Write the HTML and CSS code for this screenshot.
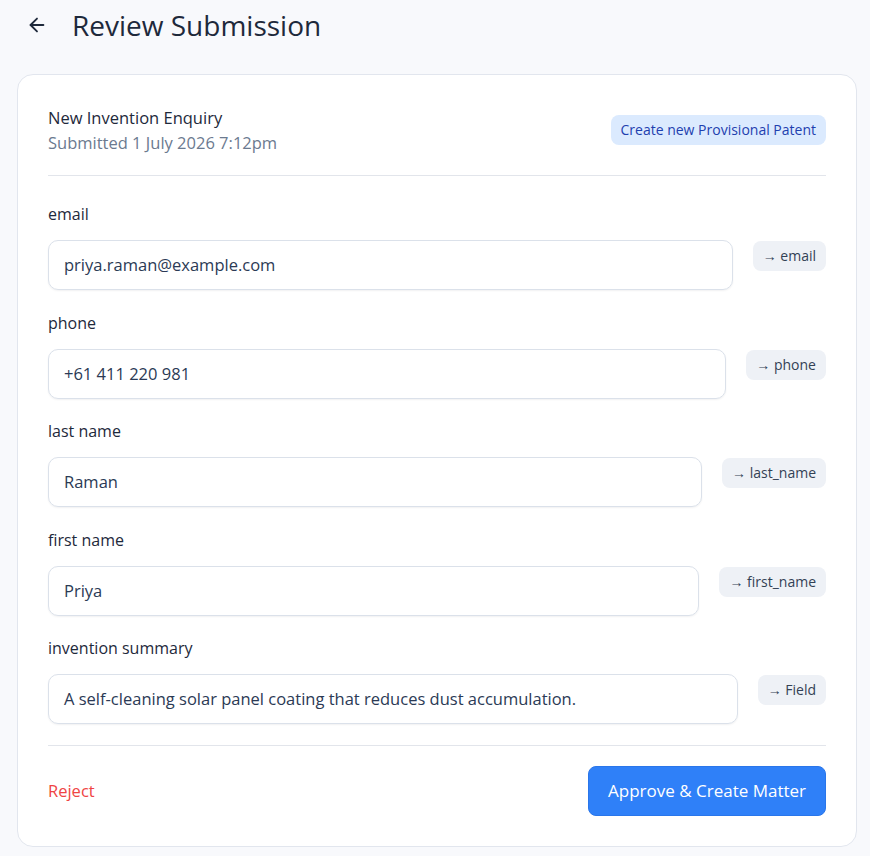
FILE: index.html
```html
<!DOCTYPE html>
<html lang="en">
<head>
    <meta charset="UTF-8">
    <meta name="viewport" content="width=device-width, initial-scale=1.0">
    <title>Review Submission</title>
    <link rel="stylesheet" href="styles.css">
</head>
<body>
    <div class="page-header">
        <a href="#" class="back-link" aria-label="Back">
            <svg width="22" height="22" viewBox="0 0 24 24" fill="none" stroke="currentColor" stroke-width="2" stroke-linecap="round" stroke-linejoin="round">
                <path d="M19 12H5"/>
                <path d="M12 19l-7-7 7-7"/>
            </svg>
        </a>
        <h1>Review Submission</h1>
    </div>

    <div class="review-card">
        <div class="review-head">
            <div>
                <div class="form-name">New Invention Enquiry</div>
                <div class="submitted-at">Submitted 1 July 2026 7:12pm</div>
            </div>
            <span class="matter-chip">Create new Provisional Patent</span>
        </div>

        <div class="field-list">
            <div class="field">
                <label>email</label>
                <div class="field-row">
                    <div class="field-value">priya.raman@example.com</div>
                    <span class="map-tag">→ email</span>
                </div>
            </div>
            <div class="field">
                <label>phone</label>
                <div class="field-row">
                    <div class="field-value">+61 411 220 981</div>
                    <span class="map-tag">→ phone</span>
                </div>
            </div>
            <div class="field">
                <label>last name</label>
                <div class="field-row">
                    <div class="field-value">Raman</div>
                    <span class="map-tag">→ last_name</span>
                </div>
            </div>
            <div class="field">
                <label>first name</label>
                <div class="field-row">
                    <div class="field-value">Priya</div>
                    <span class="map-tag">→ first_name</span>
                </div>
            </div>
            <div class="field">
                <label>invention summary</label>
                <div class="field-row">
                    <div class="field-value">A self-cleaning solar panel coating that reduces dust accumulation.</div>
                    <span class="map-tag">→ Field</span>
                </div>
            </div>
        </div>

        <div class="review-actions">
            <a href="#" class="reject-link">Reject</a>
            <button class="approve-button">Approve &amp; Create Matter</button>
        </div>
    </div>
</body>
</html>
```
FILE: styles.css
```css
body {
    font-family: "Open Sans", "Noto Sans", sans-serif;
    margin: 0;
    padding: 0 13px 0 17px;
    background-color: #f8f9fc;
    color: #1e293b;
}

.page-header {
    display: flex;
    align-items: center;
    height: 50px;
    padding-left: 9px;
    margin-bottom: 24px;
}

.back-link {
    display: flex;
    color: #1e293b;
    margin-right: 24px;
}

.page-header h1 {
    margin: 0;
    font-size: 28px;
    font-weight: 400;
    color: #1e293b;
}

.review-card {
    background-color: #fff;
    border: 1px solid #e2e6ee;
    border-radius: 16px;
    padding: 30px;
}

.review-head {
    display: flex;
    justify-content: space-between;
    align-items: flex-start;
    padding: 0 0 20px;
    border-bottom: 1px solid #e2e5eb;
}

.form-name {
    font-size: 16.5px;
    line-height: 25px;
    color: #1e293b;
}

.submitted-at {
    font-size: 16.5px;
    line-height: 25px;
    color: #6b7a90;
}

.matter-chip {
    margin-top: 10px;
    background-color: #dbeafe;
    color: #1e40af;
    font-size: 14px;
    line-height: 30px;
    padding: 0 10px;
    border-radius: 8px;
}

.field-list {
    padding-top: 26px;
}

.field {
    margin-bottom: 20.5px;
}

.field label {
    display: block;
    font-size: 16px;
    line-height: 24px;
    margin-bottom: 14px;
    color: #1e293b;
}

.field-row {
    display: flex;
    align-items: flex-start;
    gap: 20px;
}

.field-value {
    flex: 1;
    box-sizing: border-box;
    height: 50px;
    padding: 0 15px;
    line-height: 48px;
    font-size: 16.5px;
    color: #2b3a55;
    border: 1px solid #dbe1ea;
    border-radius: 10px;
    box-shadow: 0 1px 2px rgba(15, 23, 42, 0.06);
    white-space: nowrap;
    overflow: hidden;
}

.map-tag {
    margin-top: 1px;
    background-color: #eef1f6;
    color: #334155;
    font-size: 14px;
    line-height: 30px;
    padding: 0 10px;
    border-radius: 8px;
    white-space: nowrap;
}

.review-actions {
    display: flex;
    justify-content: space-between;
    align-items: center;
    border-top: 1px solid #e2e5eb;
    padding-top: 20px;
}

.reject-link {
    color: #ef4444;
    text-decoration: none;
    font-size: 16.5px;
}

.approve-button {
    background-color: #2f80f8;
    color: white;
    border: 1px solid #2a76ea;
    height: 50px;
    padding: 0 19px;
    border-radius: 8px;
    font-family: inherit;
    font-size: 17px;
    cursor: pointer;
}
```
